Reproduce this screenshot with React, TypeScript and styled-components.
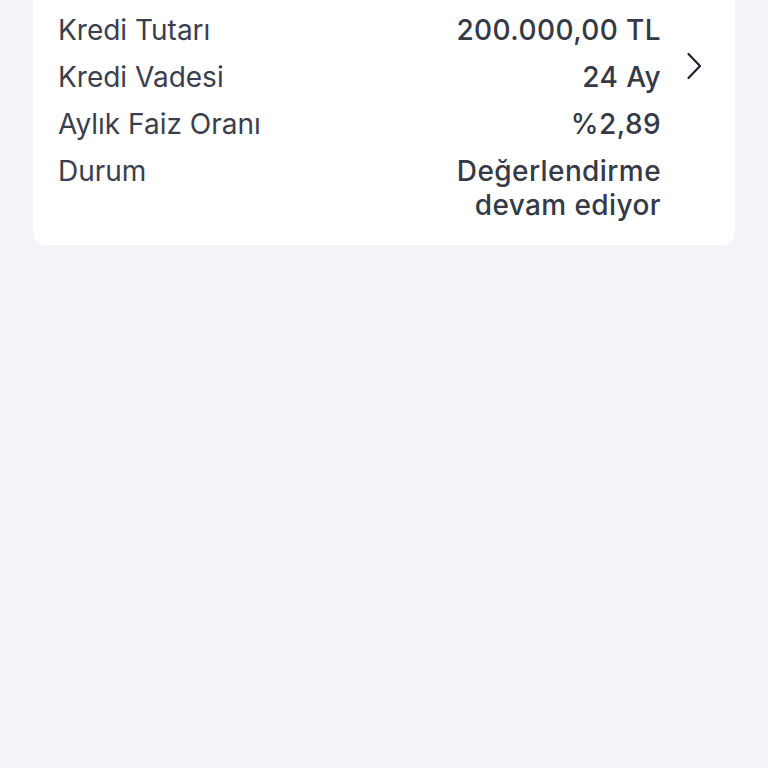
import { createGlobalStyle, styled } from "styled-components";

const GlobalStyle = createGlobalStyle`
  html, body {
    margin: 0;
    padding: 0;
    background-color: #f3f4f9;
    font-family: Inter, "Noto Sans", sans-serif;
  }
`;

const rows = [
  { label: "Kredi Tutarı", value: ["200.000,00 TL"] },
  { label: "Kredi Vadesi", value: ["24 Ay"] },
  { label: "Aylık Faiz Oranı", value: ["%2,89"] },
  { label: "Durum", value: ["Değerlendirme", "devam ediyor"] },
];

const App = () => {
  return (
    <Page>
      <GlobalStyle />
      <Card>
        <Details>
          {rows.map((row) => (
            <Row key={row.label}>
              <Label>{row.label}</Label>
              <Value>
                {row.value.map((line) => (
                  <span key={line}>{line}</span>
                ))}
              </Value>
            </Row>
          ))}
        </Details>
        <Arrow>
          <svg width="16" height="28" viewBox="0 0 16 28" fill="none">
            <path
              d="M2.5 2 L14 14 L2.5 26"
              stroke="#1f2230"
              strokeWidth="2.2"
              strokeLinecap="round"
              strokeLinejoin="round"
            />
          </svg>
        </Arrow>
      </Card>
    </Page>
  );
};

export default App;

const Page = styled.div`
  min-height: 768px;
  background-color: #f3f4f9;
  padding: 0 33px;
  overflow: hidden;
`;

const Card = styled.div`
  margin-top: -40px;
  background-color: #ffffff;
  border-radius: 12px;
  display: flex;
  align-items: flex-start;
  padding: 53px 33px 23px 25px;
  gap: 25px;
`;

const Details = styled.div`
  flex: 1;
  display: flex;
  flex-direction: column;
  gap: 13px;
`;

const Row = styled.div`
  display: flex;
  justify-content: space-between;
  align-items: flex-start;
  font-size: 28px;
  line-height: 34px;
  color: #3b3e4c;
`;

const Label = styled.div`
  font-weight: 400;
`;

const Value = styled.div`
  font-weight: 500;
  letter-spacing: 0.4px;
  text-align: right;
  display: flex;
  flex-direction: column;
  color: #363946;
`;

const Arrow = styled.div`
  display: flex;
  padding-top: 39px;
`;
